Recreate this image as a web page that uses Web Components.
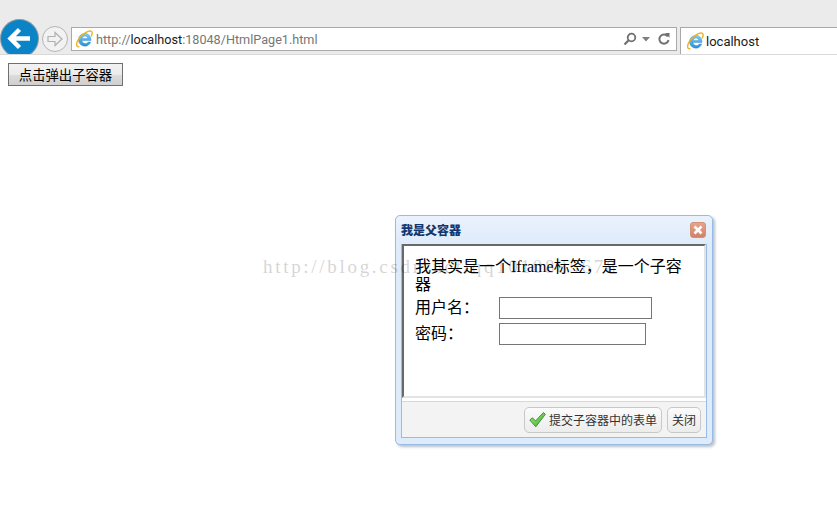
<!DOCTYPE html>
<html lang="zh">
<head>
<meta charset="utf-8">
<title>HtmlPage1</title>
<style>
  html, body { margin: 0; height: 100%; background: #fff; overflow: hidden; }
  body { font-family: "Liberation Sans", "Noto Sans CJK SC", sans-serif; }
</style>
</head>
<body>
<browser-chrome url-host="localhost" url-rest=":18048/HtmlPage1.html" tab-title="localhost"></browser-chrome>
<page-body>
  <push-button>点击弹出子容器</push-button>
</page-body>
<dialog-window heading="我是父容器">
  <form-frame></form-frame>
  <dialog-button slot="actions" icon="check">提交子容器中的表单</dialog-button>
  <dialog-button slot="actions">关闭</dialog-button>
</dialog-window>
<water-mark>http://blog.csdn.net/qq1010885678</water-mark>

<template id="ie-icon">
  <svg width="18" height="18" viewBox="0 0 18 18" style="display:block;flex:none">
    <defs>
      <linearGradient id="ieBlue" x1="0" y1="0" x2="0" y2="1">
        <stop offset="0" stop-color="#7fcdf2"/><stop offset="1" stop-color="#2a8fd6"/>
      </linearGradient>
    </defs>
    <path d="M16 10.500H7C7.200 12.500 8.500 13.500 10.200 13.500C11.500 13.500 12.500 13 13.100 12H15.700C14.700 14.700 12.600 16.200 10 16.200C6.400 16.200 3.500 13.500 3.500 9.800C3.500 6 6.400 3.400 10 3.400C13.800 3.400 16.200 6.300 16 10.500ZM7.100 8.400H12.800C12.600 6.900 11.500 6 10 6C8.500 6 7.400 6.900 7.100 8.400Z" fill="url(#ieBlue)" stroke="#2a86c8" stroke-width=".4"/>
    <path d="M3.800 16.800C.6 16.800 1 12.500 4.400 8C8 3.500 13.500 .3 16 1.200C17.600 1.900 17.400 3.800 16.400 5.800" fill="none" stroke="#f2b01e" stroke-width="1.400" stroke-linecap="round"/>
  </svg>
</template>

<script>
const ieIcon = () => document.getElementById('ie-icon').innerHTML;

class BrowserChrome extends HTMLElement {
    connectedCallback() {
        const root = this.attachShadow({ mode: 'open' });
        root.innerHTML = `
            <style>
                :host {
                    display: flex;
                    align-items: flex-start;
                    height: 55px;
                    padding-top: 20px;
                    box-sizing: border-box;
                    background: #ebebeb;
                    border-bottom: 1px solid #d9d9d9;
                    font-family: Roboto, "Noto Sans", sans-serif;
                    font-size: 13px;
                }
                .back {
                    width: 37px;
                    height: 37px;
                    margin-left: 1px;
                    border-radius: 50%;
                    flex: none;
                    background: #0a84c6;
                    box-shadow: 0 0 0 1px #8a9aa5;
                    clip-path: inset(-2px -2px 3px -2px);
                }
                .back svg, .fwd svg { display: block; }
                .fwd {
                    width: 24px;
                    height: 24px;
                    margin: 6px 0 0 4px;
                    border: 1px solid #b5b5b5;
                    border-radius: 50%;
                    flex: none;
                    background: #f2f2f2;
                }
                .addr {
                    flex: none;
                    width: 606px;
                    height: 24px;
                    margin: 7px 0 0 3px;
                    box-sizing: border-box;
                    background: #fff;
                    border: 1px solid #a9a9a9;
                    display: flex;
                    align-items: center;
                    padding: 0 5px 0 3px;
                    color: #767676;
                    gap: 3px;
                    font-size: 12.65px;
                }
                .addr b { font-weight: 400; color: #1a1a1a; }
                .url { flex: 1; white-space: nowrap; }
                .tools { display: flex; align-items: center; gap: 5px; }
                .tab {
                    flex: 1;
                    margin: 7px 0 0 3px;
                    height: 27px;
                    box-sizing: border-box;
                    background: #fff;
                    border-left: 1px solid #a9a9a9;
                    border-top: 1px solid #a9a9a9;
                    display: flex;
                    align-items: center;
                    padding-left: 5px;
                    gap: 2px;
                    color: #1a1a1a;
                }
            </style>
            <div class="back">
                <svg width="37" height="37" viewBox="0 0 37 37">
                    <path d="M9 18.500H29M18.500 9.500L9.500 18.500L18.500 27.500" fill="none" stroke="#fff" stroke-width="4.500" stroke-linejoin="miter"/>
                </svg>
            </div>
            <div class="fwd">
                <svg width="24" height="24" viewBox="0 0 24 24">
                    <path d="M5 9.500H12V5.500L19 12L12 18.500V14.500H5Z" fill="none" stroke="#b0b0b0" stroke-width="1.200"/>
                </svg>
            </div>
            <div class="addr">
                ${ieIcon()}
                <span class="url">http://<b>${this.getAttribute('url-host')}</b>${this.getAttribute('url-rest')}</span>
                <span class="tools">
                    <svg width="14" height="14" viewBox="0 0 14 14">
                        <circle cx="8.500" cy="5.500" r="3.800" fill="none" stroke="#707070" stroke-width="1.800"/>
                        <path d="M5.700 8.300L1.500 12.500" stroke="#707070" stroke-width="2.200"/>
                    </svg>
                    <svg width="8" height="5" viewBox="0 0 8 5"><path d="M0 0H8L4 4.500Z" fill="#808080"/></svg>
                    <svg width="14" height="14" viewBox="0 0 14 14" style="margin-left:2px">
                        <path d="M10.800 4.500A4.600 4.600 0 1 0 11.500 8" fill="none" stroke="#707070" stroke-width="1.900"/>
                        <path d="M8 1L12.500 1V5.800Z" fill="#707070"/>
                    </svg>
                </span>
            </div>
            <div class="tab">${ieIcon()}<span>${this.getAttribute('tab-title')}</span></div>
        `;
    }
}

class PageBody extends HTMLElement {
    constructor() {
        super();
        this.attachShadow({ mode: 'open' }).innerHTML = `
            <style>
                :host { display: block; padding: 8px; }
            </style>
            <slot></slot>
        `;
    }
}

class PushButton extends HTMLElement {
    constructor() {
        super();
        this.attachShadow({ mode: 'open' }).innerHTML = `
            <style>
                :host {
                    display: inline-flex;
                    align-items: center;
                    justify-content: center;
                    box-sizing: border-box;
                    width: 115px;
                    height: 23px;
                    border: 1px solid #707070;
                    background: linear-gradient(#f2f2f2 0%, #ebebeb 50%, #dddddd 51%, #cfcfcf 100%);
                    font-family: "Noto Sans CJK SC", sans-serif;
                    font-size: 13.33px;
                    color: #000;
                }
            </style>
            <slot></slot>
        `;
    }
}

class DialogWindow extends HTMLElement {
    constructor() {
        super();
        this.attachShadow({ mode: 'open' }).innerHTML = `
            <style>
                :host {
                    position: absolute;
                    left: 395px;
                    top: 215px;
                    width: 318px;
                    height: 230px;
                    box-sizing: border-box;
                    display: flex;
                    flex-direction: column;
                    padding: 0 5px 6px;
                    background: #deebfb;
                    border: 1px solid #99bbe8;
                    border-radius: 5px;
                    box-shadow: 2px 2px 3px #b9c0c8;
                    font-family: "Noto Sans CJK SC", sans-serif;
                }
                header {
                    height: 28px;
                    flex: none;
                    display: flex;
                    align-items: center;
                    justify-content: space-between;
                    margin: 0 -5px;
                    padding: 0 6px 1px 5px;
                    box-sizing: border-box;
                    border-radius: 5px 5px 0 0;
                    background: linear-gradient(#eaf2fd, #dfebfb);
                }
                h1 {
                    margin: 0;
                    font-size: 12px;
                    font-weight: 900;
                    color: #12386f;
                }
                .close {
                    width: 16px;
                    height: 16px;
                    box-sizing: border-box;
                    border: 1px solid #cf9279;
                    border-radius: 3px;
                    background: linear-gradient(#e6a58b, #d68066);
                }
                .close svg { display: block; }
                .body {
                    flex: 1;
                    display: flex;
                    flex-direction: column;
                    min-height: 0;
                    border: 1px solid #99bbe8;
                    border-top: 0;
                    background: #f3f3f3;
                }
                .frame {
                    flex: 1;
                    min-height: 0;
                    display: flex;
                    padding-bottom: 3px;
                    background: #fff;
                }
                footer {
                    height: 36px;
                    flex: none;
                    box-sizing: border-box;
                    border-top: 1px solid #d8d8d8;
                    display: flex;
                    align-items: center;
                    justify-content: flex-end;
                    gap: 5px;
                    padding: 0 5px 0 0;
                }
            </style>
            <header>
                <h1>${this.getAttribute('heading')}</h1>
                <div class="close">
                    <svg width="14" height="14" viewBox="0 0 14 14">
                        <path d="M3.500 3.500L10.500 10.500M10.500 3.500L3.500 10.500" stroke="#fff" stroke-width="2.600"/>
                    </svg>
                </div>
            </header>
            <div class="body">
                <div class="frame"><slot></slot></div>
                <footer><slot name="actions"></slot></footer>
            </div>
        `;
    }
}

class FormFrame extends HTMLElement {
    constructor() {
        super();
        this.attachShadow({ mode: 'open' }).innerHTML = `
            <style>
                :host {
                    flex: 1;
                    display: block;
                    box-sizing: border-box;
                    background: #fff;
                    border: 2px solid;
                    border-color: #696969 #e3e3e3 #e3e3e3 #696969;
                    padding: 12px 11px;
                    font-family: "Liberation Serif", "Noto Sans CJK SC", serif;
                    font-size: 16px;
                    line-height: 18px;
                    color: #000;
                }
                p { margin: 0 0 3px; }
                .row { display: flex; align-items: center; height: 22px; margin-bottom: 4px; }
                label { width: 84px; flex: none; }
                input {
                    box-sizing: border-box;
                    height: 22px;
                    padding: 0;
                    border: 1px solid #767676;
                    background: #fff;
                }
                #user { width: 153px; }
                #pass { width: 147px; }
            </style>
            <p>我其实是一个Iframe标签，是一个子容器</p>
            <div class="row"><label for="user">用户名：</label><input id="user" type="text"></div>
            <div class="row"><label for="pass">密码：</label><input id="pass" type="text"></div>
        `;
    }
}

class DialogButton extends HTMLElement {
    constructor() {
        super();
        const check = this.getAttribute('icon') === 'check' ? `
            <svg width="17" height="17" viewBox="0 0 17 17">
                <defs>
                    <linearGradient id="checkGreen" x1="0" y1="0" x2="1" y2="1">
                        <stop offset="0" stop-color="#a5ec6a"/><stop offset="1" stop-color="#3fae35"/>
                    </linearGradient>
                </defs>
                <path d="M.8 9L3.500 6.800L6.500 10L14.500 1.500L16.300 3.300L6.800 15.800Z" fill="url(#checkGreen)" stroke="#3d8f3a" stroke-width="1"/>
            </svg>` : '';
        this.attachShadow({ mode: 'open' }).innerHTML = `
            <style>
                :host {
                    display: inline-flex;
                    align-items: center;
                    height: 26px;
                    box-sizing: border-box;
                    padding: 0 4px;
                    gap: 3px;
                    border: 1px solid #c8c8c8;
                    border-radius: 5px;
                    background: linear-gradient(#fbfbfb, #ececec);
                    font-family: "Noto Sans CJK SC", sans-serif;
                    font-size: 12px;
                    color: #333;
                    white-space: nowrap;
                }
                svg { display: block; }
            </style>
            ${check}<slot></slot>
        `;
    }
}

class WaterMark extends HTMLElement {
    constructor() {
        super();
        this.attachShadow({ mode: 'open' }).innerHTML = `
            <style>
                :host {
                    position: absolute;
                    left: 263px;
                    top: 257px;
                    font-family: "Liberation Serif", serif;
                    font-size: 19px;
                    line-height: 20px;
                    letter-spacing: 2.7px;
                    color: #000;
                    opacity: 0.16;
                    white-space: nowrap;
                    pointer-events: none;
                }
            </style>
            <slot></slot>
        `;
    }
}

customElements.define('browser-chrome', BrowserChrome);
customElements.define('page-body', PageBody);
customElements.define('push-button', PushButton);
customElements.define('dialog-window', DialogWindow);
customElements.define('form-frame', FormFrame);
customElements.define('dialog-button', DialogButton);
customElements.define('water-mark', WaterMark);
</script>
</body>
</html>
